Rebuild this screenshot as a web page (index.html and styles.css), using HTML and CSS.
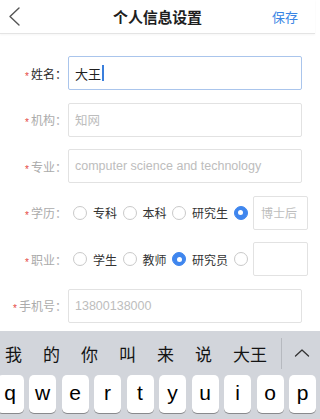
FILE: index.html
```html
<!DOCTYPE html>
<html lang="zh-CN">
<head>
<meta charset="utf-8">
<title>个人信息设置</title>
<link rel="stylesheet" href="styles.css">
</head>
<body>
<div class="page">
  <header class="nav">
    <div class="nav-left">
      <svg class="back" width="12" height="19" viewBox="0 0 12 19"><path d="M11 1 L2 9.5 L11 18" fill="none" stroke="#555" stroke-width="1.4" stroke-linecap="round" stroke-linejoin="round"/></svg>
    </div>
    <h1 class="title">个人信息设置</h1>
    <div class="nav-right"><span class="save">保存</span></div>
  </header>

  <div class="form">
    <div class="row">
      <div class="label label-active"><span class="req">*</span>姓名：</div>
      <div class="field field-focus"><span class="value">大王</span><span class="caret"></span></div>
    </div>
    <div class="row">
      <div class="label"><span class="req">*</span>机构：</div>
      <div class="field"><span class="ph">知网</span></div>
    </div>
    <div class="row">
      <div class="label"><span class="req">*</span>专业：</div>
      <div class="field"><span class="ph latin">computer science and technology</span></div>
    </div>
    <div class="row">
      <div class="label"><span class="req">*</span>学历：</div>
      <div class="choices">
        <span class="opt"><span class="radio"></span>专科</span>
        <span class="opt"><span class="radio"></span>本科</span>
        <span class="opt"><span class="radio"></span>研究生</span>
        <span class="opt"><span class="radio radio-on radio-solo"></span></span>
        <div class="mini"><span class="ph">博士后</span></div>
      </div>
    </div>
    <div class="row">
      <div class="label"><span class="req">*</span>职业：</div>
      <div class="choices">
        <span class="opt"><span class="radio"></span>学生</span>
        <span class="opt"><span class="radio"></span>教师</span>
        <span class="opt"><span class="radio radio-on"></span>研究员</span>
        <span class="opt"><span class="radio radio-solo"></span></span>
        <div class="mini"></div>
      </div>
    </div>
    <div class="row">
      <div class="label"><span class="req">*</span>手机号：</div>
      <div class="field"><span class="ph latin">13800138000</span></div>
    </div>
  </div>

  <div class="keyboard">
    <div class="candidates">
      <div class="cand-list">
        <span>我</span><span>的</span><span>你</span><span>叫</span><span>来</span><span>说</span><span>大王</span>
      </div>
      <span class="divider"></span>
      <svg class="up" width="16" height="10" viewBox="0 0 16 10"><path d="M1.5 8 L8 2 L14.5 8" fill="none" stroke="#333" stroke-width="1.3" stroke-linecap="round" stroke-linejoin="round"/></svg>
    </div>
    <div class="keys">
      <span class="key">q</span><span class="key">w</span><span class="key">e</span><span class="key">r</span><span class="key">t</span><span class="key">y</span><span class="key">u</span><span class="key">i</span><span class="key">o</span><span class="key">p</span>
    </div>
  </div>
</div>
</body>
</html>
```
FILE: styles.css
```css
* { box-sizing: border-box; }
html, body { margin: 0; padding: 0; background: #fff; }
body {
  font-family: "Noto Sans CJK SC", "Liberation Sans", sans-serif;
  color: #222;
}
.page {
  width: 320px;
  height: 419px;
  overflow: hidden;
  display: flex;
  flex-direction: column;
}

/* nav */
.nav {
  width: 315px;
  height: 34px;
  flex: none;
  display: grid;
  grid-template-columns: 1fr auto 1fr;
  align-items: center;
  border-bottom: 1px solid #e4e4e4;
  box-shadow: 0 1px 2px rgba(0,0,0,0.04);
}
.nav-left { padding-left: 8px; display: flex; align-items: center; }
.back { display: block; }
.title {
  margin: 0;
  font-size: 15px;
  font-weight: 600;
  color: #1e1e1e;
  line-height: 20px;
  letter-spacing: -0.2px;
}
.nav-right { display: flex; justify-content: flex-end; padding-right: 17px; }
.save { color: #3a86e4; font-size: 13px; }

/* form */
.form {
  flex: 1;
  padding-top: 22px;
  display: flex;
  flex-direction: column;
  gap: 12.6px;
}
.row {
  height: 34px;
  display: flex;
  align-items: center;
}
.label {
  width: 67px;
  text-align: right;
  font-size: 12px;
  color: #ababab;
  white-space: nowrap;
}
.label-active { color: #2a2a2a; }
.req {
  color: #e5483f;
  font-family: "Liberation Sans", sans-serif;
  font-size: 10px;
  margin-right: 2px;
  vertical-align: -1px;
}
.field {
  width: 234px;
  height: 34px;
  margin-left: 1px;
  border: 1px solid #e2e2e2;
  border-radius: 2px;
  padding: 0 6px;
  display: flex;
  align-items: center;
  font-size: 12.5px;
}
.field-focus { border-color: #aac5ec; }
.value { color: #1f1f1f; font-size: 13px; }
.caret {
  width: 1.5px;
  height: 16px;
  background: #3a7fdc;
  margin-left: 1px;
}
.ph { color: #bdbdbd; }
.latin { font-family: "Liberation Sans", "Noto Sans CJK SC", sans-serif; font-size: 12.5px; }

.choices {
  margin-left: 1px;
  padding-left: 5px;
  display: flex;
  align-items: center;
  gap: 5.5px;
  font-size: 12px;
  color: #333;
}
.opt { display: flex; align-items: center; }
.radio {
  flex: none;
  width: 14px;
  height: 14px;
  border: 1px solid #c9c9c9;
  border-radius: 50%;
  margin-right: 6px;
  background: #fff;
  display: inline-flex;
  align-items: center;
  justify-content: center;
}
.radio-solo { margin-right: 0; }
.radio-on { background: #3f86ee; border-color: #3f86ee; }
.radio-on::after {
  content: "";
  width: 5px;
  height: 5px;
  border-radius: 50%;
  background: #fff;
}
.mini {
  width: 55px;
  height: 34px;
  border: 1px solid #e2e2e2;
  border-radius: 2px;
  padding-left: 7px;
  display: flex;
  align-items: center;
  font-size: 12px;
}

/* keyboard */
.keyboard {
  flex: none;
  height: 88px;
  background: #d2d5db;
  overflow: hidden;
}
.candidates {
  height: 44px;
  display: flex;
  align-items: center;
  padding-left: 5px;
}
.cand-list {
  display: flex;
  gap: 21px;
  font-size: 17px;
  color: #141414;
  line-height: 1;
}
.divider {
  width: 1px;
  height: 31px;
  background: #b6b9bf;
  margin-left: 14px;
}
.up { margin-left: 12px; display: block; }
.keys {
  height: 38px;
  margin-left: -3.5px;
  display: flex;
  gap: 5.5px;
}
.key {
  flex: none;
  width: 27px;
  height: 38px;
  background: #fff;
  border-radius: 5px;
  box-shadow: 0 1px 0 #898a8d;
  display: flex;
  align-items: center;
  justify-content: center;
  font-family: "Liberation Sans", sans-serif;
  font-size: 21px;
  color: #000;
  padding-bottom: 2px;
}
```
